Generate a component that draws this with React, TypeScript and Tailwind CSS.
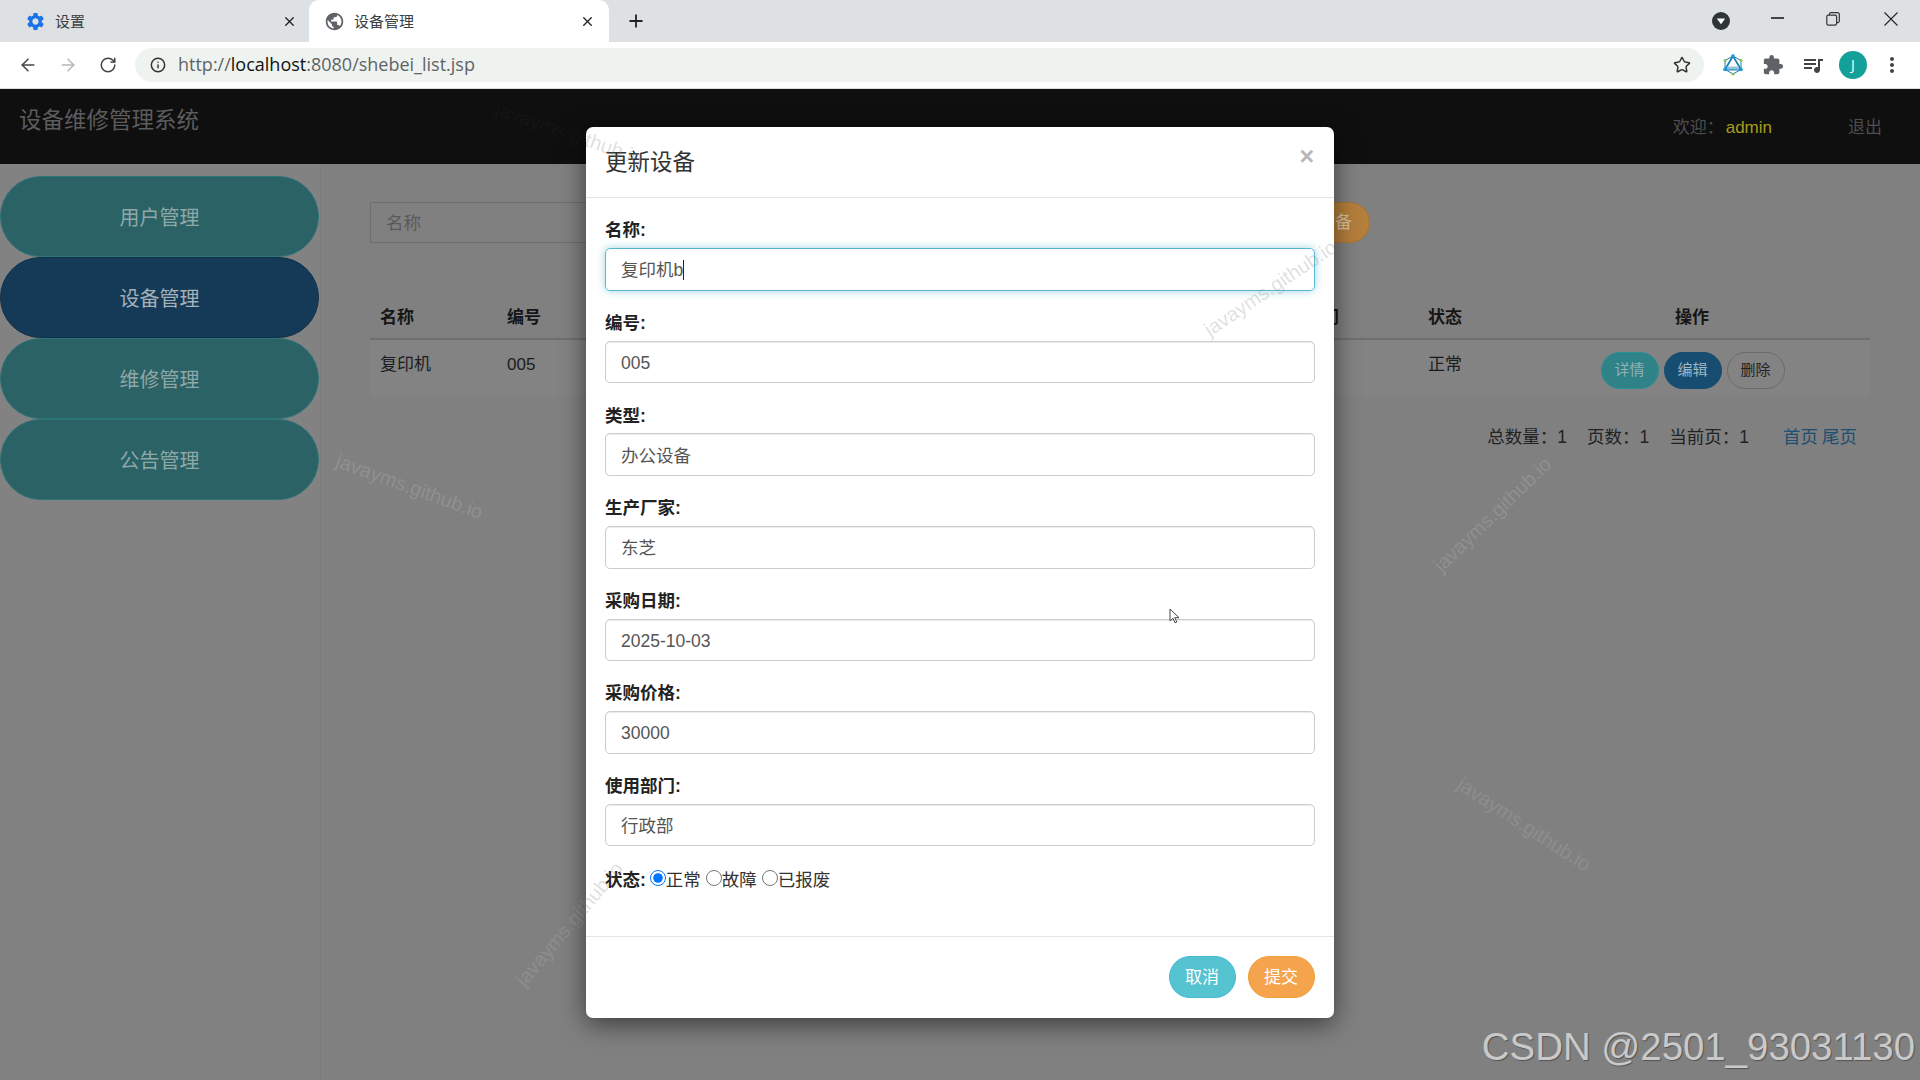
import { ArrowLeft, ArrowRight, Info, Plus, RotateCw, Star, X } from "lucide-react";
import { MdExtension, MdMoreVert, MdPublic, MdQueueMusic, MdSettings } from "react-icons/md";

const NAV = ["用户管理", "设备管理", "维修管理", "公告管理"];

const FIELDS = [
    { label: "名称:", value: "复印机b", focused: true },
    { label: "编号:", value: "005" },
    { label: "类型:", value: "办公设备" },
    { label: "生产厂家:", value: "东芝" },
    { label: "采购日期:", value: "2025-10-03" },
    { label: "采购价格:", value: "30000" },
    { label: "使用部门:", value: "行政部" }
];

// the columns behind the dialog are one wide gap, only their edges show
const GRID = "grid grid-cols-[127px_798px_123px_96px_356px]";

function Chrome() {
    return (
        <div className="font-['Open_Sans','Noto_Sans_CJK_SC',sans-serif] text-[#3c4043]">
            <div className="h-[42px] bg-[#dee1e3] flex items-center">
                <div className="w-[309px] h-full flex items-center pl-[25px] pr-[12px]">
                    <MdSettings className="w-[21px] h-[21px] text-[#1a73e8]" />
                    <span className="ml-[9px] text-[15px]">设置</span>
                    <X className="w-[15px] h-[15px] ml-auto text-[#222]" strokeWidth={2.2} />
                </div>
                <div className="w-[300px] h-full bg-white rounded-t-[10px] flex items-center pl-[15px] pr-[14px]">
                    <MdPublic className="w-[21px] h-[21px] text-[#5f6368]" />
                    <span className="ml-[9px] text-[15px]">设备管理</span>
                    <X className="w-[15px] h-[15px] ml-auto text-[#222]" strokeWidth={2.2} />
                </div>
                <Plus className="w-[20px] h-[20px] ml-[17px] text-[#222]" strokeWidth={2.2} />
                <div className="ml-auto flex items-center pr-[3px]">
                    <div className="w-[56px] flex justify-center">
                        <svg width="18" height="18" viewBox="0 0 18 18">
                            <circle cx="9" cy="9" r="9" fill="#2f3437" />
                            <path d="M4.8 6.6h8.4L9 12.2z" fill="#fff" />
                        </svg>
                    </div>
                    <div className="w-[56px] flex justify-center">
                        <div className="w-[13px] h-[1.5px] bg-[#444] -translate-y-[3px]" />
                    </div>
                    <div className="w-[56px] flex justify-center">
                        <svg width="14" height="14" viewBox="0 0 14 14" fill="none" stroke="#333" strokeWidth="1.2" className="-translate-y-[2px]">
                            <rect x="0.8" y="3.2" width="9.8" height="10" rx="1.6" />
                            <path d="M3.4 3V2.2A1.5 1.5 0 0 1 4.9 .7h6.4A2 2 0 0 1 13.3 2.7v6.4a1.5 1.5 0 0 1-1.5 1.5h-1" />
                        </svg>
                    </div>
                    <div className="w-[56px] flex justify-center">
                        <svg width="14" height="14" viewBox="0 0 14 14" stroke="#222" strokeWidth="1.1" className="-translate-y-[2px] translate-x-[2px]">
                            <path d="M.5.5l13 13M13.500.5l-13 13" />
                        </svg>
                    </div>
                </div>
            </div>
            <div className="h-[47px] bg-white border-b border-[#dcdcdc] flex items-center pl-[8px] pb-[1px]">
                <div className="w-[40px] flex justify-center"><ArrowLeft className="w-[20px] h-[20px] text-[#444]" strokeWidth={1.8} /></div>
                <div className="w-[40px] flex justify-center"><ArrowRight className="w-[20px] h-[20px] text-[#b4b6b8]" strokeWidth={1.8} /></div>
                <div className="w-[40px] flex justify-center"><RotateCw className="w-[18px] h-[18px] text-[#444]" strokeWidth={2} /></div>
                <div className="ml-[7px] w-[1569px] h-[34px] rounded-full bg-[#eff3ef] flex items-center pl-[15px] pr-[13px]">
                    <Info className="w-[16px] h-[16px] text-[#333]" strokeWidth={2.2} />
                    <span className="ml-[12px] text-[18px] text-[#5f6368]">
                        http://<span className="text-[#111]">localhost</span>:8080/shebei_list.jsp
                    </span>
                    <Star className="w-[18px] h-[18px] ml-auto text-[#333]" strokeWidth={2} />
                </div>
                <div className="ml-[9px] flex items-center">
                    <div className="w-[40px] flex justify-center">
                        <svg width="20" height="22" viewBox="0 0 20 22" fill="none">
                            <path d="M10 2L18 6.500V15.500L10 20L2 15.500V6.500z" stroke="#1d7fb8" strokeWidth="1" />
                            <path d="M10 2L2 15.500H18z" stroke="#1d7fb8" strokeWidth="1.8" />
                            <path d="M4 14h12" stroke="#8fc7de" strokeWidth="3" />
                            <circle cx="10" cy="2" r="1.800" fill="#1d9ad6" />
                            <circle cx="2" cy="15.500" r="1.800" fill="#1d9ad6" />
                            <circle cx="18" cy="15.500" r="1.800" fill="#1d9ad6" />
                            <circle cx="2" cy="6.500" r="1.500" fill="#8bc34a" />
                            <circle cx="18" cy="6.500" r="1.500" fill="#8bc34a" />
                            <circle cx="10" cy="20" r="1.500" fill="#8bc34a" />
                        </svg>
                    </div>
                    <div className="w-[40px] flex justify-center"><MdExtension className="w-[22px] h-[22px] text-[#5f6368]" /></div>
                    <div className="w-[40px] flex justify-center"><MdQueueMusic className="w-[24px] h-[24px] text-[#444]" /></div>
                    <div className="w-[40px] flex justify-center">
                        <div className="w-[28px] h-[28px] rounded-full bg-[#12a098] text-white text-[14px] flex items-center justify-center">J</div>
                    </div>
                    <div className="w-[38px] flex justify-center"><MdMoreVert className="w-[24px] h-[24px] text-[#444]" /></div>
                </div>
            </div>
        </div>
    );
}

function Field({ label, value, focused }: { label: string; value: string; focused?: boolean }) {
    return (
        <div className="mb-[19.5px]">
            <div className="h-[24.5px] mb-[6px] pt-[1px] flex items-center text-[17.5px] font-bold text-[#222]">{label}</div>
            <div
                className={
                    focused
                        ? "h-[42.6px] rounded-[5px] border border-[#5bb5d2] px-[15px] pt-[2px] flex items-center text-[17.5px] text-[#555] shadow-[0_0_9px_rgba(91,181,210,0.6)]"
                        : "h-[42.6px] rounded-[5px] border border-[#ccc] px-[15px] pt-[2px] flex items-center text-[17.5px] text-[#555] shadow-[inset_0_1px_1px_rgba(0,0,0,0.08)]"
                }
            >
                {value}
                {focused && <span className="w-[1px] h-[20px] bg-[#222]" />}
            </div>
        </div>
    );
}

function Modal() {
    return (
        <div className="absolute left-[586px] top-[127px] w-[748px] h-[891px] bg-white rounded-[7px] shadow-[0_6px_26px_rgba(0,0,0,0.55)] text-[#333]">
            <div className="relative h-full flex flex-col rounded-[7px] overflow-hidden">
                <div className="h-[71px] shrink-0 border-b border-[#e5e5e5] pl-[19px] pr-[20px] pt-[2px] flex items-center justify-between">
                    <span className="text-[22.5px] text-[#333]">更新设备</span>
                    <span className="text-[25px] font-bold text-[#b8b8b8] -translate-y-[6px]">×</span>
                </div>
                <div className="flex-1 pl-[19px] pr-[19.5px] pt-[19.7px]">
                    {FIELDS.map(f => (
                        <Field key={f.label} {...f} />
                    ))}
                    <div className="h-[24.5px] mt-[1px] pt-[4px] flex items-center text-[17.5px]">
                        <span className="font-bold text-[#222] mr-[4px]">状态:</span>
                        <input type="radio" name="status" defaultChecked className="w-[16px] h-[16px] m-0 -translate-y-[2px]" />
                        <span className="mr-[5px]">正常</span>
                        <input type="radio" name="status" className="w-[16px] h-[16px] m-0 -translate-y-[2px]" />
                        <span className="mr-[5px]">故障</span>
                        <input type="radio" name="status" className="w-[16px] h-[16px] m-0 -translate-y-[2px]" />
                        <span>已报废</span>
                    </div>
                </div>
                <div className="h-[82px] shrink-0 border-t border-[#e5e5e5] pt-[19px] pr-[19.5px] flex justify-end gap-[12px]">
                    <div className="w-[67px] h-[42px] pt-[1px] rounded-full bg-[#56c3d0] border border-[#46b8da] text-white text-[17px] flex items-center justify-center">取消</div>
                    <div className="w-[67px] h-[42px] pt-[1px] rounded-full bg-[#f6a34e] border border-[#eea236] text-white text-[17px] flex items-center justify-center">提交</div>
                </div>

                {/* watermarks crossing the dialog, clipped to it */}
                <span className="absolute left-[606px] top-[143px] w-[165px] text-[20px] whitespace-nowrap text-[#808080]/25 rotate-[-34deg]">javayms.github.io</span>
                <span className="absolute left-[-94px] top-[-7px] w-[165px] text-[20px] whitespace-nowrap text-[#808080]/25 rotate-[19deg]">javayms.github.io</span>
                <span className="absolute left-[-96px] top-[778px] w-[165px] text-[20px] whitespace-nowrap text-[#808080]/25 rotate-[-50deg]">javayms.github.io</span>
            </div>
        </div>
    );
}

export default function App() {
    return (
        <div className="relative w-[1920px] h-[1080px] overflow-hidden bg-[#808080] font-['Liberation_Sans','Noto_Sans_CJK_SC',sans-serif]">
            <Chrome />

            <div className="h-[75px] bg-[#0f0f0f] flex items-center pl-[19px]">
                <span className="text-[22.5px] text-[#5c5c5c] -translate-y-[6px]">设备维修管理系统</span>
                <div className="ml-auto flex items-center pt-[2px] text-[17px] text-[#4d4d4d] pr-[38px]">
                    <span>欢迎：</span>
                    <span className="ml-[2px] text-[#a89c1c]">admin</span>
                    <span className="ml-[76px]">退出</span>
                </div>
            </div>

            <div className="flex h-[916px]">
                <div className="w-[321px] shrink-0 bg-[#828282] border-r border-[#7b7b7b] pt-[12px]">
                    {NAV.map((n, i) => (
                        <div
                            key={n}
                            className={
                                i === 1
                                    ? "w-[319px] h-[81px] pt-[2px] rounded-full bg-[#153a57] border border-[#123048] text-[20px] text-[#a3b1b8] flex items-center justify-center"
                                    : "w-[319px] h-[81px] pt-[2px] rounded-full bg-[#2b6266] border border-[#2d7479] text-[20px] text-[#8ea8a8] flex items-center justify-center"
                            }
                        >
                            {n}
                        </div>
                    ))}
                </div>

                <div className="w-[1549px] pl-[49px] pt-[38px]">
                    <div className="flex items-center w-[1000px]">
                        <div className="w-[600px] h-[41px] pt-[2px] border border-[#6e6e6e] pl-[15px] flex items-center text-[17.5px] text-[#5a5a5a]">名称</div>
                        <div className="ml-auto w-[100px] h-[41px] rounded-full bg-[#b57f3c] border border-[#a8742f] text-[17px] text-[#d9c3a4] flex items-center justify-end pr-[17px]">新增设备</div>
                    </div>

                    <div className={`${GRID} w-[1500px] mt-[54px] h-[43px] border-b-2 border-[#6f6f6f] items-center text-[17px] font-bold text-[#161616]`}>
                        <div className="pl-[10px]">名称</div>
                        <div className="pl-[10px]">编号</div>
                        <div className="pl-[10px]">部门</div>
                        <div className="pl-[10px]">状态</div>
                        <div className="text-center">操作</div>
                    </div>
                    <div className={`${GRID} w-[1500px] h-[57px] bg-[#838383] text-[17px] text-[#1c1c1c]`}>
                        <div className="pl-[10px] pt-[12px]">复印机</div>
                        <div className="pl-[10px] pt-[12px]">005</div>
                        <div />
                        <div className="pl-[10px] pt-[12px]">正常</div>
                        <div className="flex justify-center gap-[5px] pt-[12px] pl-[1px] text-[15px]">
                            <div className="w-[58px] h-[37px] rounded-full bg-[#2f8288] border border-[#2a8f95] text-[#8fb3b5] flex items-center justify-center">详情</div>
                            <div className="w-[58px] h-[37px] rounded-full bg-[#164d70] border border-[#164d70] text-[#a3b6c2] flex items-center justify-center">编辑</div>
                            <div className="w-[58px] h-[37px] rounded-full border border-[#6a6a6a] text-[#222] flex items-center justify-center">删除</div>
                        </div>
                    </div>

                    <div className="w-[1500px] h-[24px] mt-[28px] pr-[13px] flex justify-end items-center text-[17.5px] text-[#222]">
                        <span>总数量：1</span>
                        <span className="ml-[20px]">页数：1</span>
                        <span className="ml-[20px]">当前页：1</span>
                        <span className="ml-[34px] text-[#1d4f70]">首页</span>
                        <span className="ml-[4px] text-[#1d4f70]">尾页</span>
                    </div>
                </div>
            </div>

            {/* watermarks on the dimmed page */}
            <span className="absolute left-[332px] top-[473px] w-[165px] text-[20px] whitespace-nowrap text-white/15 rotate-[20deg]">javayms.github.io</span>
            <span className="absolute left-[1413px] top-[494px] w-[170px] text-[20px] whitespace-nowrap text-white/15 rotate-[-44deg]">javayms.github.io</span>
            <span className="absolute left-[1446px] top-[812px] w-[165px] text-[20px] whitespace-nowrap text-white/10 rotate-[33deg]">javayms.github.io</span>
            <span className="absolute left-[492px] top-[120px] w-[165px] text-[20px] whitespace-nowrap text-white/[0.03] rotate-[19deg]">javayms.github.io</span>
            <span className="absolute left-[490px] top-[905px] w-[165px] text-[20px] whitespace-nowrap text-white/10 rotate-[-50deg]">javayms.github.io</span>

            <Modal />

            <svg width="12" height="16" viewBox="0 0 12 16" className="absolute left-[1169px] top-[608px]">
                <path d="M1 1v12l3-2.600 2 4.400 1.800-.8-2-4.300H10z" fill="#fff" stroke="#444" strokeWidth="1" />
            </svg>

            <span className="absolute right-[5px] top-[1025px] text-[38.4px] leading-[44px] whitespace-nowrap text-[#c9c9c9] [text-shadow:1px_1px_1px_rgba(0,0,0,0.35)]">CSDN @2501_93031130</span>
        </div>
    );
}
